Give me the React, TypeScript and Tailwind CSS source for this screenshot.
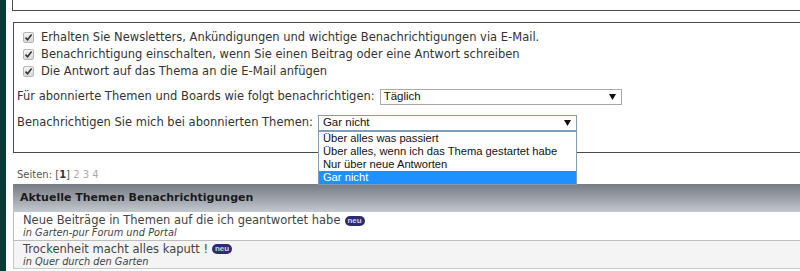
import React from "react";

const Check = () => (
  <span className="inline-flex w-[11px] h-[11px] items-center justify-center rounded-[2px] border border-[#b5b5b5] bg-gradient-to-b from-[#f4f4f4] to-[#d8d8d8] mr-[7px] shrink-0">
    <svg width="9" height="9" viewBox="0 0 9 9">
      <path d="M1.5 4.6 L3.6 6.8 L7.6 1.6" fill="none" stroke="#333" strokeWidth="1.6" />
    </svg>
  </span>
);

const Neu = () => (
  <span className="inline-flex items-center justify-center ml-[4px] w-[20px] h-[10px] rounded-[5px] bg-[#2c2e6b] text-[#d0d3f5] text-[8px] leading-none font-bold align-middle" style={{ fontFamily: "'Liberation Sans', Arial, sans-serif" }}>
    neu
  </span>
);

const Arrow = () => (
  <svg width="7" height="6" viewBox="0 0 7 6" className="shrink-0">
    <path d="M0 0 H7 L3.5 6 Z" fill="#111" />
  </svg>
);

export default function App() {
  const ff = { fontFamily: "'DejaVu Sans', Verdana, sans-serif" };
  const sf = { fontFamily: "'Liberation Sans', Arial, sans-serif" };
  return (
    <div className="flex w-[800px] h-[271px] overflow-hidden bg-white text-[#333]" style={ff}>
      <div className="w-[6px] shrink-0 bg-[#0b3b37]" />
      <div className="flex-1 flex flex-col pl-[6px]">
        <div className="h-[11px] border-l border-b border-[#4a4a4a]" />
        <div className="h-[11px]" />
        <div className="relative h-[131px] ml-px border-t border-l border-b border-[#4a4a4a] text-[11.5px]">
          <div className="pl-[9px] pt-[6px]">
            <div className="flex items-center h-[17px]"><Check /><span>Erhalten Sie Newsletters, Ankündigungen und wichtige Benachrichtigungen via E-Mail.</span></div>
            <div className="flex items-center h-[17px]"><Check /><span>Benachrichtigung einschalten, wenn Sie einen Beitrag oder eine Antwort schreiben</span></div>
            <div className="flex items-center h-[17px]"><Check /><span>Die Antwort auf das Thema an die E-Mail anfügen</span></div>
          </div>
          <div className="flex items-center mt-[9px] pl-[3px] h-[16px]">
            <span>Für abonnierte Themen und Boards wie folgt benachrichtigen:</span>
            <div className="ml-[5px] w-[242px] h-[16px] border border-[#a9a9a9] flex items-center justify-between pl-[3px] pr-[5px] text-[11.5px] text-[#111]" style={sf}>
              <span>Täglich</span>
              <Arrow />
            </div>
          </div>
          <div className="flex items-center mt-[10px] pl-[3px] h-[16px]">
            <span>Benachrichtigen Sie mich bei abonnierten Themen:</span>
            <div className="relative ml-[5px] w-[259px] h-[16px]">
              <div className="w-full h-full border border-[#7f9db9] flex items-center justify-between pl-[4px] pr-[5px] text-[11.5px] text-[#111]" style={sf}>
                <span>Gar nicht</span>
                <Arrow />
              </div>
              <div className="absolute left-0 top-[16px] w-[259px] bg-white border border-[#7f9db9] text-[11.2px] text-[#111] z-10 flex flex-col leading-[13px]" style={sf}>
                <div className="pl-[4px] h-[13px]">Über alles was passiert</div>
                <div className="pl-[4px] h-[13px]">Über alles, wenn ich das Thema gestartet habe</div>
                <div className="pl-[4px] h-[13px]">Nur über neue Antworten</div>
                <div className="pl-[4px] h-[13px] bg-[#1e90ff] text-white">Gar nicht</div>
              </div>
            </div>
          </div>
        </div>
        <div className="h-[31px] flex items-center pl-[5px] pt-[12px] text-[10px] text-[#555]">
          <span>Seiten: [<b className="text-[#333]">1</b>] <span className="text-[#aaa]">2 3 4</span></span>
        </div>
        <div className="ml-px h-[28px] flex items-center pl-[7px] bg-gradient-to-b from-[#767b84] to-[#c4c8cf] text-[11px] font-bold text-[#1a1a1a]">
          Aktuelle Themen Benachrichtigungen
        </div>
        <div className="ml-px h-[29px] border-l border-b border-[#bdbdbd] bg-white pl-[9px] flex flex-col justify-center">
          <div className="text-[11.5px] leading-[13px] text-[#444]">Neue Beiträge in Themen auf die ich geantwortet habe<Neu /></div>
          <div className="text-[9.8px] leading-[11px] italic text-[#444]">in Garten-pur Forum und Portal</div>
        </div>
        <div className="ml-px h-[28px] border-l border-b border-[#c8c8c8] bg-[#f4f4f4] pl-[9px] flex flex-col justify-center">
          <div className="text-[11.5px] leading-[13px] text-[#444]">Trockenheit macht alles kaputt !<Neu /></div>
          <div className="text-[9.8px] leading-[11px] italic text-[#444]">in Quer durch den Garten</div>
        </div>
      </div>
    </div>
  );
}
